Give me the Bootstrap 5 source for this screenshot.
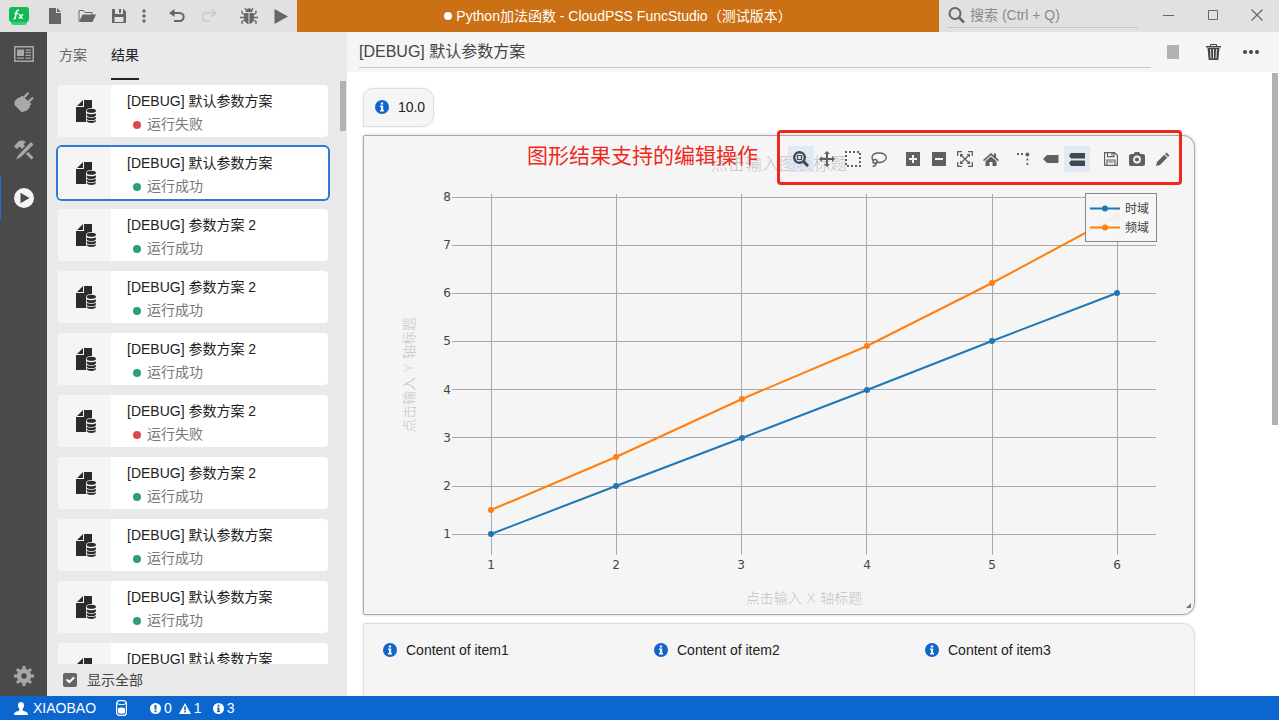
<!DOCTYPE html>
<html lang="zh-CN">
<head>
<meta charset="utf-8">
<meta name="viewport" content="width=device-width, initial-scale=1">
<title>Python加法函数 - CloudPSS FuncStudio</title>
<link rel="stylesheet" href="https://cdn.jsdelivr.net/npm/bootstrap@5.3.0/dist/css/bootstrap.min.css">
<style>
  body { font-family: "Liberation Sans", "Noto Sans CJK SC", sans-serif; font-size: 14px; line-height: 20px; color: #222; }
  svg { display: block; flex: none; }
  .plain { border: 0; background: none; padding: 0; color: inherit; display: flex; align-items: center; justify-content: center; }
  .line-input { border: 0; border-bottom: 1px solid #c8c8c8; background: none; padding: 0; outline: 0; min-width: 0; }

  .title-bar { height: 32px; background: #e1e1e1; color: #666; }
  .tools { width: 297px; }
  .tools .plain { width: 32px; height: 32px; }
  .tools .logo { width: 39px; padding-left: 9px; }
  .tools .more { width: 18px; margin-right: 8px; }
  .tools .gap-after { margin-right: 8px; }
  .doc-title { background: #cb7014; color: #fff; }
  .doc-title .dot-mark { width: 8px; height: 8px; }
  .right-tools { width: 340px; padding-left: 9px; }
  .search-box { width: 190px; height: 28px; padding-top: 3px; border-bottom: 1px solid #c4c4c4; }
  .search-box input { border: 0; background: none; outline: 0; padding: 0; width: 160px; color: #555; }
  .search-box input::placeholder { color: #8a8a8a; opacity: 1; }
  .win .plain { width: 44px; height: 30px; }

  .rail { width: 47px; background: #4a4a4a; color: #a8a8a8; }
  .rail .plain { width: 47px; height: 44px; margin-bottom: 4px; }
  .rail .plain.active { color: #f4f4f4; box-shadow: inset 1px 0 #1f6fd0; }
  .rail .plain:last-child { height: 40px; margin-bottom: 0; }

  .side { width: 300px; background: #eaeaea; }
  .side-tabs { height: 48px; padding-left: 12px; gap: 24px; }
  .side-tabs a { color: #666; text-decoration: none; padding-top: 13px; border-bottom: 2px solid transparent; }
  .side-tabs a.active { color: #222; border-color: #222; }
  .runs { padding: 5px 19px 0 11px; }
  .run { height: 52px; margin-bottom: 10px; background: #fff; border-radius: 4px; width: 100%; color: #222; text-align: left; border: 0; padding: 0; overflow: hidden; flex: none; }
  .run.active { box-shadow: 0 0 0 2px #2f7bd4; }
  .run .thumb { width: 53px; background: #f5f5f5; color: #2b2b2b; padding: 1px 0 0 3px; }
  .run .info { padding: 5px 0 0 16px; line-height: 23px; }
  .run .state { color: #777; padding-left: 6px; gap: 6px; }
  .state i { width: 8px; height: 8px; border-radius: 50%; background: #2e9e78; }
  .state.failed i { background: #dc4650; }
  .bar-thumb { position: absolute; width: 6px; background: #b1b1b1; right: 1px; }
  .show-all { height: 32px; padding-left: 16px; padding-bottom: 1px; gap: 10px; color: #444; }
  .show-all .form-check-input { width: 14px; height: 14px; margin: 0; border-radius: 2px; border-color: #666; background-size: 14px; }
  .show-all .form-check-input:checked { background-color: #666; }

  .head { height: 40px; background: #f5f5f5; padding: 0 9px 0 12px; color: #444; }
  .head input { font-size: 16px; height: 36px; color: #444; margin: -4px 2px 0 0; }
  .head .plain { width: 39px; height: 40px; }
  .results { padding: 16px 84px 0 16px; }
  .tile { background: #f5f5f5; border: 1px solid #dedede; position: relative; box-shadow: 0 0 2px #e4e4e4; }
  .tile .mark-i { color: #1065cc; }
  .value { height: 39px; width: 71px; border-radius: 10px 12px 12px 0; gap: 9px; padding: 0 0 2px 3px; }
  .plot { border-color: #aaa; border-radius: 2px 12px 12px 2px; box-shadow: 0 0 3px #c4c4c4; margin: 8px 0; }
  .plot text { font-family: "DejaVu Sans", "Noto Sans CJK SC", sans-serif; font-size: 12px; fill: #444; }
  .plot .axis-hint { font-size: 14px; font-weight: 300; fill: #c4c4c4; }
  .plot .plot-hint { font-size: 17px; font-weight: 300; fill: #c4c4c4; }
  .modebar { position: absolute; top: 10px; right: 18px; gap: 8px; color: #606060; }
  .modebar .plain { width: 26px; height: 26px; }
  .modebar .plain.active { background: rgba(205, 222, 242, .55); color: #414850; }
  .callout { position: absolute; top: -6px; right: 12px; width: 405px; height: 55px; border: 3px solid #f0281c; border-radius: 4px; pointer-events: none; }
  .callout-text { position: absolute; top: 8px; right: 436px; font-size: 21px; line-height: 24px; color: #f0281c; white-space: nowrap; }
  .items { min-height: 100px; padding: 16px 8px 16px 9px; border-radius: 2px 12px 12px 2px; }
  .items .cell { padding-left: 10px; gap: 9px; }

  .status { height: 24px; background: #0b66d0; color: #fff; padding-left: 14px; }
  .status .user { gap: 5px; margin-right: 20px; }
  .status .counts { gap: 7px; margin-left: 23px; }
  .counts span { gap: 3px; }
</style>
</head>
<body class="vh-100 d-flex flex-column overflow-hidden">

<svg width="0" height="0" class="position-absolute" aria-hidden="true">
  <symbol id="i-run" viewBox="0 0 20 23"><path fill="currentColor" d="M1 6 7 0v6zM8 0h8v8c-4 0-6 1-6 3v11H0V7h8z"/><g fill="currentColor"><ellipse cx="15.300" cy="10.800" rx="4.600" ry="2"/><path d="M10.700 13.200c2 1.400 7.200 1.400 9.200 0v1.800c0 2.700-9.200 2.700-9.200 0zM10.700 16.700c2 1.400 7.200 1.400 9.200 0v1.600c0 2.700-9.200 2.700-9.200 0zM10.700 20c2 1.300 7.200 1.300 9.200 0v.700c0 3-9.200 3-9.200 0z"/></g></symbol>
  <symbol id="i-info" viewBox="0 0 14 14"><circle cx="7" cy="7" r="7" fill="currentColor"/><path fill="#f5f5f5" d="M5.800 2.500h2.400v2H5.800zM5 5.600h3.200v4.500H9v1.300H5v-1.300h.900V6.900H5z"/></symbol>
</svg>

<header class="title-bar d-flex flex-shrink-0">
  <div class="tools d-flex flex-shrink-0">
    <div class="logo d-flex align-items-center">
      <svg width="20" height="20" viewBox="0 0 20 20"><rect x="2" y="8" width="16" height="11" rx="3" fill="#35cf74"/><rect y="1" width="20" height="15" rx="3" fill="#12b955"/><path d="M10 4.500c-2-.700-2.500.500-2.700 2l-1 5c-.200 1-.700 1.500-1.700 1.200M5.500 7.500h3.800M10 8.500c1.500-.500 1.500 4 3.800 3.700M14.200 8.500c-1.500 0-2.700 3.800-4.500 3.700" fill="none" stroke="#fff" stroke-width="1.500"/></svg>
    </div>
    <button class="plain" aria-label="新建"><svg width="14" height="16" viewBox="0 0 14 16"><path fill="currentColor" d="M1 0h7v5h5v11H1zM9 0l4 4H9z"/></svg></button>
    <button class="plain" aria-label="打开"><svg width="18" height="14" viewBox="0 0 18 14"><path fill="none" stroke="currentColor" d="M1 12.500V1.500h4.500l1.500 2h7V6"/><path fill="currentColor" d="M4.500 5.500H18L14.500 13H1z"/></svg></button>
    <button class="plain" aria-label="保存"><svg width="14" height="14" viewBox="0 0 14 14"><path fill="currentColor" fill-rule="evenodd" d="M0 0h11.500L14 2.500V14H0zM3 0v5h8V0H9v4H7V0zM2.500 8v5h9V8z"/></svg></button>
    <button class="plain more" aria-label="更多"><svg width="4" height="14" viewBox="0 0 4 14" fill="currentColor"><circle cx="2" cy="2" r="1.700"/><circle cx="2" cy="7" r="1.700"/><circle cx="2" cy="12" r="1.700"/></svg></button>
    <button class="plain" aria-label="撤销"><svg width="16" height="14" viewBox="0 0 16 14"><path fill="currentColor" d="M5.500 0v8L0 4z"/><path d="M4 4h6.500c5.500 0 5.500 8 0 8H5" fill="none" stroke="currentColor" stroke-width="2"/></svg></button>
    <button class="plain gap-after" aria-label="重做" disabled><svg width="16" height="14" viewBox="0 0 16 14" color="#c9c9c9"><path d="M10.500.500 15 4l-4.500 3.500M15 4H5.500c-5.500 0-5.500 8 0 8H9" fill="none" stroke="currentColor" stroke-width="1.500"/></svg></button>
    <button class="plain" aria-label="调试"><svg width="18" height="16" viewBox="0 0 18 16"><path fill="currentColor" d="M5.500 4c.500-5 6.500-5 7 0zM4.500 5h4v11C5 15.500 4 12 4 9zM9.500 5h4l.500 4c0 3-1 6.500-4.500 7z"/><path stroke="currentColor" stroke-width="1.300" fill="none" d="M5 7 2 5V2.500M13 7l3-2V2.500M4.500 9.500H0M13.500 9.500H18M5 12l-3 1.500V16M13 12l3 1.500V16M6 2 5 0M12 2l1-2"/></svg></button>
    <button class="plain" aria-label="运行"><svg width="14" height="15" viewBox="0 0 14 15"><path fill="currentColor" d="M.500 0 14 7.500.500 15z"/></svg></button>
  </div>
  <div class="doc-title flex-grow-1 d-flex align-items-center justify-content-center gap-1">
    <span class="dot-mark bg-white rounded-circle"></span><span class="text-nowrap">Python加法函数 - CloudPSS FuncStudio（测试版本）</span>
  </div>
  <div class="right-tools d-flex flex-shrink-0 justify-content-between">
    <label class="search-box d-flex align-items-center gap-1">
      <svg width="18" height="18" viewBox="0 0 18 18"><circle cx="7" cy="7.500" r="5.500" fill="none" stroke="currentColor" stroke-width="2"/><path d="m11 11.500 5 5" stroke="currentColor" stroke-width="2.500"/></svg>
      <input type="text" placeholder="搜索 (Ctrl + Q)" aria-label="搜索">
    </label>
    <div class="win d-flex">
      <button class="plain" aria-label="最小化"><svg width="12" height="12"><path d="M0 6.500h11" stroke="currentColor"/></svg></button>
      <button class="plain" aria-label="最大化"><svg width="11" height="11"><path d="M.500.500h9v9h-9z" fill="none" stroke="currentColor"/></svg></button>
      <button class="plain" aria-label="关闭"><svg width="12" height="12"><path d="m.500.500 11 11m0-11-11 11" stroke="currentColor" stroke-width="1.200"/></svg></button>
    </div>
  </div>
</header>

<div class="d-flex flex-grow-1 overflow-hidden">
  <nav class="rail d-flex flex-column flex-shrink-0">
    <button class="plain" aria-label="概览"><svg width="20" height="16" viewBox="0 0 20 16"><path d="M.750.750h18.500v14.500H.750z" fill="none" stroke="currentColor" stroke-width="1.500"/><path fill="currentColor" d="M3 3.500h7V10H3zM11.500 3.500H17v1.200h-5.500zM11.500 6H17v1.200h-5.500zM11.500 8.700H17v1.200h-5.500zM3 11.500h7v1.200H3zM11.500 11.500H17v1.200h-5.500z"/></svg></button>
    <button class="plain" aria-label="接口"><svg width="20" height="20" viewBox="0 0 20 20"><path fill="currentColor" d="M8 3.500 17.500 12 16 13.500c0 4-5 6.500-8.500 6.500L1 13.500C-1 10.500 2 6 6.500 5z"/><path d="m10 5.500 4.500-4.800M14.500 10 19 5.500" stroke="currentColor" stroke-width="2.200"/></svg></button>
    <button class="plain" aria-label="实现"><svg width="20" height="20" viewBox="0 0 20 20"><path fill="currentColor" d="M0 6.500 3.500 2.500C6 0 9 0 12 2L9.500 4 11 6 8 9 5.500 6.500 3 9z"/><path d="m13 13 5.500 5.500" stroke="currentColor" stroke-width="3"/><path fill="currentColor" d="m17 2 2.500 2.500L7 17l-5 2.500L4.500 15z"/></svg></button>
    <button class="plain active" aria-label="运行"><svg width="20" height="20" viewBox="0 0 20 20"><circle cx="10" cy="10" r="10" fill="currentColor"/><path fill="#4a4a4a" d="m6.500 4.800 9 5.200-9 5.200z"/></svg></button>
    <button class="plain mt-auto" aria-label="设置"><svg width="20" height="20" viewBox="0 0 20 20"><circle cx="10" cy="10" r="5" fill="none" stroke="currentColor" stroke-width="4.500"/><path d="M10 0v4M10 16v4M0 10h4M16 10h4M3 3l3 3M14 14l3 3M17 3l-3 3M6 14l-3 3" stroke="currentColor" stroke-width="3"/></svg></button>
  </nav>

  <aside class="side d-flex flex-column flex-shrink-0">
    <nav class="side-tabs d-flex flex-shrink-0"><a href="#">方案</a><a href="#" class="active">结果</a></nav>
    <div class="flex-grow-1 overflow-hidden position-relative">
      <div class="runs d-flex flex-column" id="runs"></div>
      <div class="bar-thumb" style="top:1px;height:50px"></div>
    </div>
    <label class="show-all d-flex align-items-center flex-shrink-0"><input class="form-check-input" type="checkbox" checked>显示全部</label>
  </aside>

  <main class="flex-grow-1 d-flex flex-column overflow-hidden">
    <div class="head d-flex align-items-center flex-shrink-0">
      <input class="line-input flex-grow-1" type="text" value="[DEBUG] 默认参数方案" aria-label="结果名称">
      <div class="d-flex">
        <button class="plain" aria-label="停止"><svg width="12" height="14"><path fill="#b1b1b1" d="M0 0h12v14H0z"/></svg></button>
        <button class="plain ps-1" aria-label="删除"><svg width="15" height="16" viewBox="0 0 15 16"><path fill="none" stroke="currentColor" d="M4.500 2V.500h6V2"/><path fill="currentColor" d="M0 2h15v1.500H0zM1.500 4h12l-1.200 12H2.700z"/><path stroke="#ddd" d="m4.500 5 .500 9.500M7.500 5v9.500M10.500 5l-.500 9.500"/></svg></button>
        <button class="plain" aria-label="更多"><svg width="16" height="4" fill="currentColor"><circle cx="2" cy="2" r="2"/><circle cx="8" cy="2" r="2"/><circle cx="14" cy="2" r="2"/></svg></button>
      </div>
    </div>
    <div class="flex-grow-1 overflow-hidden position-relative bg-white">
      <div class="results">
        <div class="tile value d-flex align-items-center justify-content-center"><svg class="mark-i" width="14" height="14"><use href="#i-info"/></svg>10.0</div>

        <div class="tile plot">
          <svg class="w-100" viewBox="0 0 830 478" role="img" aria-label="时域与频域折线图">
            <path stroke="#aaa" fill="none" d="M88 61.500h704M88 109.500h704M88 157.500h704M88 205.500h704M88 253.500h704M88 301.500h704M88 350.500h704M88 398.500h704M127.500 58v361M252.500 58v361M377.500 58v361M502.500 58v361M628.500 58v361M753.500 58v361"/>
            <g text-anchor="end"><text x="87" y="65">8</text><text x="87" y="113">7</text><text x="87" y="161">6</text><text x="87" y="209">5</text><text x="87" y="258">4</text><text x="87" y="306">3</text><text x="87" y="354">2</text><text x="87" y="402">1</text></g>
            <g text-anchor="middle"><text x="127" y="433">1</text><text x="252" y="433">2</text><text x="377" y="433">3</text><text x="503" y="433">4</text><text x="628" y="433">5</text><text x="753" y="433">6</text>
              <text class="plot-hint" x="415" y="34">点击输入图表标题</text>
              <text class="axis-hint" x="440" y="467">点击输入 X 轴标题</text>
              <text class="axis-hint" transform="translate(50 239) rotate(-90)">点击输入 Y 轴标题</text></g>
            <g fill="none" stroke-width="2"><path stroke="#1f77b4" d="M127 398 252 350 378 302 503 254 628 205 753 157"/><path stroke="#ff7f0e" d="M127 374 252 321 378 263 503 210 628 147 753 80"/></g>
            <g fill="#1f77b4"><circle cx="127" cy="398" r="3"/><circle cx="252" cy="350" r="3"/><circle cx="378" cy="302" r="3"/><circle cx="503" cy="254" r="3"/><circle cx="628" cy="205" r="3"/><circle cx="753" cy="157" r="3"/></g>
            <g fill="#ff7f0e"><circle cx="127" cy="374" r="3"/><circle cx="252" cy="321" r="3"/><circle cx="378" cy="263" r="3"/><circle cx="503" cy="210" r="3"/><circle cx="628" cy="147" r="3"/><circle cx="753" cy="80" r="3"/></g>
            <rect x="721.500" y="57.500" width="71" height="48" fill="#f5f5f5" fill-opacity=".93" stroke="#888"/>
            <path stroke="#1f77b4" stroke-width="2" d="M726 72.500h30"/><circle cx="741" cy="72.500" r="3" fill="#1f77b4"/>
            <path stroke="#ff7f0e" stroke-width="2" d="M726 91.500h30"/><circle cx="741" cy="91.500" r="3" fill="#ff7f0e"/>
            <text x="761" y="77">时域</text><text x="761" y="96">频域</text>
            <path fill="#777" d="M827 467v5h-5z"/>
          </svg>
          <div class="modebar d-flex">
            <div class="d-flex">
              <button class="plain active" aria-label="缩放"><svg width="16" height="16" viewBox="0 0 16 16"><circle cx="6.500" cy="6.500" r="5.300" fill="none" stroke="currentColor" stroke-width="2.400"/><path d="M4.500 4.500h4v4h-4z" fill="none" stroke="currentColor" stroke-width="1.200"/><path d="m10.500 10.500 4.500 4.500" stroke="currentColor" stroke-width="3"/></svg></button>
              <button class="plain" aria-label="平移"><svg width="16" height="16" viewBox="0 0 16 16"><path fill="currentColor" d="M8 0 5 3h2v4H3V5L0 8l3 3V9h4v4H5l3 3 3-3H9V9h4v2l3-3-3-3v2H9V3h2z"/></svg></button>
              <button class="plain" aria-label="框选"><svg width="16" height="16" viewBox="0 0 16 16"><path d="M1 1h14v14H1z" fill="none" stroke="currentColor" stroke-width="2" stroke-dasharray="2 2" stroke-dashoffset="1"/></svg></button>
              <button class="plain" aria-label="套索"><svg width="16" height="15" viewBox="0 0 16 15"><g fill="none" stroke="currentColor" stroke-width="1.400"><path d="M2.800 9C-.500 6 1 1.500 7 1c5-.500 8.500 2 8.300 5-.300 3-5 5.500-9.300 4"/><circle cx="4" cy="9.500" r="2"/><path d="M4 10.500c2 1.500 1 3.500-2.500 4"/></g></svg></button>
            </div>
            <div class="d-flex">
              <button class="plain" aria-label="放大"><svg width="14" height="14"><path fill="currentColor" d="M0 0h14v14H0z"/><path d="M7 3v8M3 7h8" stroke="#f5f5f5" stroke-width="2"/></svg></button>
              <button class="plain" aria-label="缩小"><svg width="14" height="14"><path fill="currentColor" d="M0 0h14v14H0z"/><path d="M3 7h8" stroke="#f5f5f5" stroke-width="2"/></svg></button>
              <button class="plain" aria-label="自动缩放"><svg width="16" height="16" viewBox="0 0 16 16"><path d="M.700 5V.700H5M11 .700h4.300V5M15.300 11v4.300H11M5 15.300H.700V11" fill="none" stroke="currentColor" stroke-width="1.300"/><path d="m4 4 8 8M12 4l-8 8" stroke="currentColor" stroke-width="1.400"/><path fill="currentColor" d="M3 3h3.500L3 6.500zM13 3v3.500L9.500 3zM13 13H9.500L13 9.500zM3 13V9.500L6.500 13z"/></svg></button>
              <button class="plain" aria-label="重置"><svg width="16" height="13" viewBox="0 0 16 13"><path fill="currentColor" d="m8 0 3 2.600V.500h2v3.800l3 2.700-1 1.200L8 2.200 1 8.200 0 7zM8 3.500l5.500 4.700V13h-4V9h-3v4h-4V8.200z"/></svg></button>
            </div>
            <div class="d-flex">
              <button class="plain" aria-label="参考线"><svg width="16" height="16" viewBox="0 0 16 16"><g fill="currentColor"><path d="M0 2h2v2H0zM4 2h2v2H4zM9.500 7.500h1.800v2H9.500zM9.500 12h1.800v2H9.500z"/><circle cx="10.400" cy="3.500" r="2"/></g></svg></button>
              <button class="plain" aria-label="最近点"><svg width="16" height="10" viewBox="0 0 16 10"><path fill="currentColor" d="M0 5 4 1h11.500v8H4z"/></svg></button>
              <button class="plain active" aria-label="对比"><svg width="16" height="13" viewBox="0 0 16 13"><path fill="currentColor" d="m0 3 2-3h14v5.500H2zM0 10l2-2.500h14V13H2z"/></svg></button>
            </div>
            <div class="d-flex">
              <button class="plain" aria-label="保存"><svg width="14" height="14" viewBox="0 0 14 14"><g fill="none" stroke="currentColor" stroke-width="1.200"><path d="M.600.600h9.900l2.900 2.900v9.900H.600zM3.500.600v4h6.500v-4M3 13.400V8h8v5.400M8 1v2.500M4.500 10h5"/></g></svg></button>
              <button class="plain" aria-label="截图"><svg width="16" height="14" viewBox="0 0 16 14"><path fill="currentColor" d="M4.500 2 6 0h4l1.500 2H14q2 0 2 2v8q0 2-2 2H2q-2 0-2-2V4q0-2 2-2z"/><circle cx="8" cy="7.500" r="3" fill="none" stroke="#f5f5f5" stroke-width="1.800"/></svg></button>
              <button class="plain" aria-label="编辑"><svg width="14" height="14" viewBox="0 0 14 14"><path fill="currentColor" d="m10.500.500 3 3-1.500 1.500-3-3zM8.200 2.800l3 3L4 13l-4 1 1-4z"/></svg></button>
            </div>
          </div>
          <div class="callout-text">图形结果支持的编辑操作</div>
          <div class="callout"></div>
        </div>

        <div class="tile items">
          <div class="row g-0">
            <div class="col cell d-flex align-items-center"><svg class="mark-i" width="14" height="14"><use href="#i-info"/></svg>Content of item1</div>
            <div class="col cell d-flex align-items-center"><svg class="mark-i" width="14" height="14"><use href="#i-info"/></svg>Content of item2</div>
            <div class="col cell d-flex align-items-center"><svg class="mark-i" width="14" height="14"><use href="#i-info"/></svg>Content of item3</div>
          </div>
        </div>
      </div>
      <div class="bar-thumb" style="top:1px;height:352px"></div>
    </div>
  </main>
</div>

<footer class="status d-flex align-items-center flex-shrink-0">
  <span class="user d-flex align-items-center"><svg width="14" height="13" viewBox="0 0 14 13"><path fill="#fff" d="M7 0c2 0 3 1.300 3 3.200S9 6.500 8.500 7.200c0 1.300.500 1.600 2 2 2.500.700 3.500 1.300 3.500 3.800H0c0-2.500 1-3.100 3.500-3.800 1.500-.400 2-.700 2-2C5 6.500 4 5.100 4 3.200S5 0 7 0"/></svg>XIAOBAO</span>
  <svg width="11" height="16" viewBox="0 0 11 16"><rect x=".600" y=".600" width="9.800" height="14.800" rx="3" fill="none" stroke="#fff" stroke-width="1.200"/><path d="M1 3.500c2 1.500 7 1.500 9 0" fill="none" stroke="#fff"/><path fill="#fff" d="M2 8.500q3.500-2 7 0V13q-3.500 1.500-7 0z"/></svg>
  <div class="counts d-flex">
    <span class="d-flex align-items-center"><svg width="11" height="11" viewBox="0 0 11 11"><circle cx="5.500" cy="5.500" r="5.500" fill="#fff"/><path fill="#0b66d0" d="M4.500 2h2v4.500h-2zM4.500 7.500h2v1.700h-2z"/></svg>0</span>
    <span class="d-flex align-items-center"><svg width="12" height="11" viewBox="0 0 12 11"><path fill="#fff" d="m6 0 6 11H0z"/><path fill="#0b66d0" d="M5.200 3.500h1.600v3.700H5.200zM5.200 8h1.600v1.500H5.200z"/></svg>1</span>
    <span class="d-flex align-items-center ms-1"><svg width="11" height="11" viewBox="0 0 11 11"><circle cx="5.500" cy="5.500" r="5.500" fill="#fff"/><path fill="#0b66d0" d="M4.500 1.800h2v1.700h-2zM4 4.500h2.500V8H7v1H4V8h.500V5.500H4z"/></svg>3</span>
  </div>
</footer>

<script src="https://cdn.jsdelivr.net/npm/bootstrap@5.3.0/dist/js/bootstrap.bundle.min.js"></script>
<script>
  const runs = [
    ['默认参数方案', false], ['默认参数方案', true], ['参数方案 2', true], ['参数方案 2', true], ['参数方案 2', true],
    ['参数方案 2', false], ['参数方案 2', true], ['默认参数方案', true], ['默认参数方案', true], ['默认参数方案', true]
  ];
  document.getElementById('runs').innerHTML = runs.map(([name, ok], i) => `
    <button class="run d-flex ${i === 1 ? 'active' : ''}">
      <span class="thumb h-100 d-flex align-items-center justify-content-center"><svg width="20" height="23"><use href="#i-run"/></svg></span>
      <span class="info"><span class="d-block">[DEBUG] ${name}</span>
      <span class="state d-flex align-items-center ${ok ? '' : 'failed'}"><i></i>${ok ? '运行成功' : '运行失败'}</span></span>
    </button>`).join('');
</script>
</body>
</html>
